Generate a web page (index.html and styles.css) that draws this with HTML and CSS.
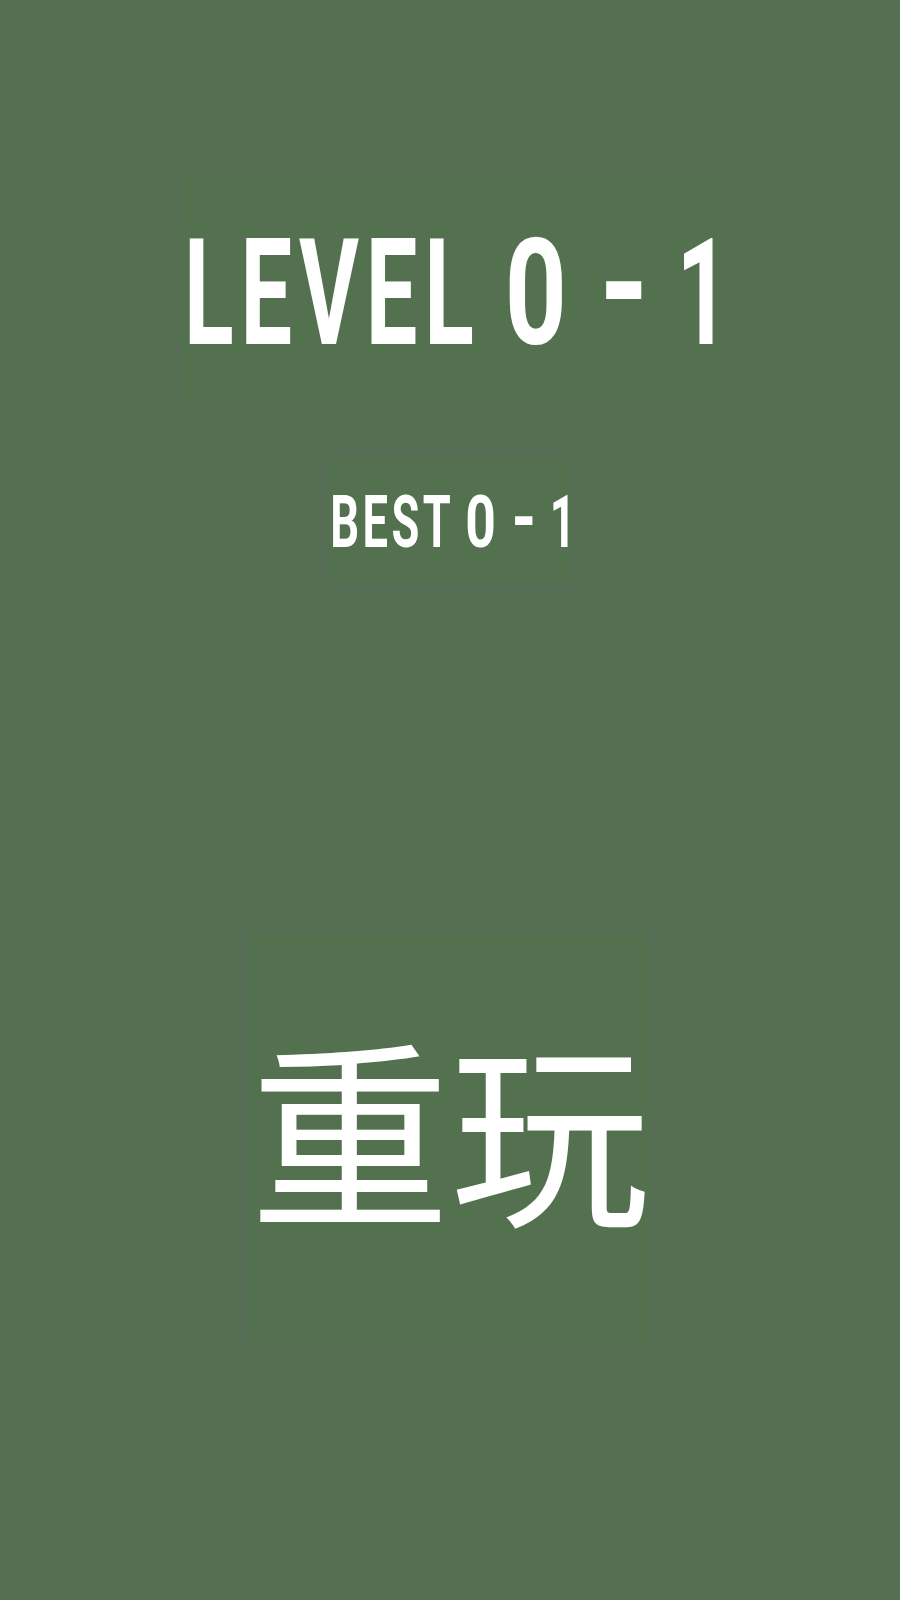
FILE: index.html
```html
<!DOCTYPE html>
<html lang="zh">
<head>
<meta charset="utf-8">
<title>Level</title>
<link rel="stylesheet" href="styles.css">
</head>
<body>
<main class="screen">
  <div class="label level"><span class="txt">LEVEL <span class="wide">0</span> <span class="dash">-</span> 1</span></div>
  <div class="label best"><span class="txt">BEST <span class="wide">0</span> <span class="dash">-</span> 1</span></div>
  <button class="label replay" type="button">重玩</button>
</main>
</body>
</html>
```

FILE: styles.css
```css
html, body {
  margin: 0;
  padding: 0;
  background: #556e54;
}

.screen {
  width: 900px;
  height: 1600px;
  display: flex;
  flex-direction: column;
  align-items: center;
}

.label {
  background: #53704f;
  color: #ffffff;
  display: flex;
  align-items: center;
  justify-content: center;
  font-family: Roboto, "DejaVu Sans", sans-serif;
  font-weight: 700;
}

/* narrow display lettering: squeeze the bold sans horizontally */
.txt {
  display: inline-block;
  white-space: nowrap;
  transform: scaleX(0.62);
}

/* the round zero is broader than the letters */
.wide {
  display: inline-block;
  transform: scaleX(1.18);
}

/* long, even dash between the two numbers, sitting at mid cap height */
.dash {
  display: inline-block;
  font-size: 1.6em;
  font-weight: 400;
  line-height: 0;
  transform: translateY(0.078em);
}

.level {
  margin-top: 177px;
  width: 540px;
  height: 221px;
  padding-top: 12px;
  box-sizing: border-box;
  font-size: 148px;
  letter-spacing: 11px;
}

.level .txt {
  margin-left: 20px;
}

.level .dash {
  padding-left: 6.5px;
  letter-spacing: 4.5px;
}

.best {
  margin-top: 62px;
  width: 244px;
  height: 121px;
  padding-top: 2px;
  box-sizing: border-box;
  font-size: 73px;
  letter-spacing: 5.5px;
}

.best .txt {
  margin-left: 10px;
}

.best .dash {
  padding-left: 3.25px;
  letter-spacing: 2.25px;
}

.replay {
  margin-top: 351px;
  width: 401px;
  height: 410px;
  border: 0;
  padding: 0 0 24px;
  box-sizing: border-box;
  font-family: "Noto Sans CJK SC", sans-serif;
  font-weight: normal;
  font-size: 200px;
  letter-spacing: 0;
}
```
